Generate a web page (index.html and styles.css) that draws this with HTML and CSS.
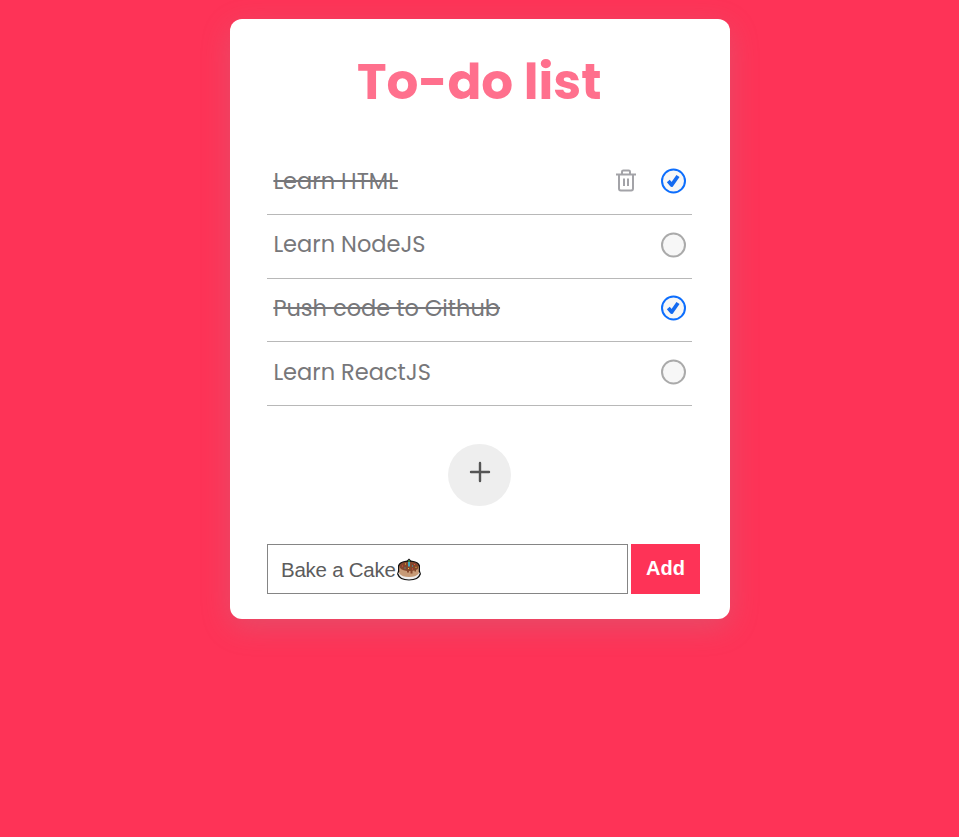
FILE: index.html
```html
<!DOCTYPE html>
<html lang="en">
<head>
<meta charset="utf-8">
<title>To-do list</title>
<link rel="stylesheet" href="styles.css">
</head>
<body>
<main class="card">
  <h1 class="title">To-do list</h1>
  <ul class="list">
    <li class="item">
      <span class="label done">Learn HTML</span>
      <svg class="trash" viewBox="0 0 20 23" fill="none" stroke="#a3a3a8" stroke-width="2"><path d="M0 5.5H20M6 5V2.8Q6 1.5 7.3 1.5H12.7Q14 1.5 14 2.8V5M3 6V19.5Q3 21.5 4.8 21.5H15.2Q17 21.5 17 19.5V6M8 9.5V17M12 9.5V17"/></svg>
      <svg class="check" viewBox="0 0 26 26"><circle cx="13.5" cy="13" r="11.5" fill="#f7f7f7" stroke="#0d6efd" stroke-width="2"/><path d="M8.3 13L11.7 17L18 8" fill="none" stroke="#146af0" stroke-width="3.8" stroke-linejoin="round"/></svg>
    </li>
    <li class="item">
      <span class="label">Learn NodeJS</span>
      <svg class="check" viewBox="0 0 26 26"><circle cx="13.5" cy="14" r="11.5" fill="#f7f7f7" stroke="#aaa" stroke-width="2"/></svg>
    </li>
    <li class="item">
      <span class="label done">Push code to Github</span>
      <svg class="check" viewBox="0 0 26 26"><circle cx="13.5" cy="13" r="11.5" fill="#f7f7f7" stroke="#0d6efd" stroke-width="2"/><path d="M8.3 13L11.7 17L18 8" fill="none" stroke="#146af0" stroke-width="3.8" stroke-linejoin="round"/></svg>
    </li>
    <li class="item">
      <span class="label">Learn ReactJS</span>
      <svg class="check" viewBox="0 0 26 26"><circle cx="13.5" cy="13" r="11.5" fill="#f7f7f7" stroke="#aaa" stroke-width="2"/></svg>
    </li>
  </ul>
  <button class="plus" aria-label="New task"><svg viewBox="0 0 22 22"><path d="M11 2V20M2 11H20" stroke="#555" stroke-width="2.4" stroke-linecap="round"/></svg></button>
  <form class="entry">
    <div class="field" role="textbox"><span class="value">Bake a Cake</span><svg class="cake" viewBox="0 0 24 23">
      <path d="M12 .5L14 2.5Q22 3.5 23 7.5V13L24 16Q22 22.5 12 22.5T0 16L1 13V7.5Q2 3.5 10 2.5Z" fill="#111"/>
      <path d="M1.3 15.5Q3 21.4 12 21.4T22.7 15.5L22 14H2Z" fill="#eee"/>
      <path d="M2.2 8H21.8V15.5Q19 19 12 19T2.2 15.5Z" fill="#c69a76"/>
      <path d="M2.2 8Q3 3.7 12 3.7T21.8 8Q21.5 11 19 12V13.5H17.5V12.5L15.5 12.8V15.5H13.5V13H12V14.5H10V13Q2.5 12 2.2 8Z" fill="#84472c"/>
      <path d="M12 4V8.5" stroke="#35b8d3" stroke-width="1.8"/><path d="M12 2V4" stroke="#43b64a" stroke-width="1.2"/>
      <path d="M5 8H6M17 6.5H18M15 11H16" stroke="#eb4c43"/><path d="M8 6H9M11 10.5H12M18.5 9.3H19.5" stroke="#f4cc32"/><path d="M7.5 10H8.5M15 8H16" stroke="#35b8d3"/>
    </svg></div>
    <button class="add" type="button">Add</button>
  </form>
</main>
</body>
</html>
```
FILE: styles.css
```css
* { box-sizing: border-box; }
body {
  margin: 0;
  min-height: 837px;
  padding-top: 19px;
  background: #fe3357;
  font-family: Poppins, Inter, sans-serif;
}
.card {
  width: 500px;
  height: 600px;
  margin: 0 0 0 230px;
  padding: 24px 30px 25px 37px;
  display: flex;
  flex-direction: column;
  background: #fff;
  border-radius: 12px;
  box-shadow: 0 8px 30px rgba(149, 157, 165, .24);
}
.title {
  margin: 0 0 0 90px;
  height: 107px;
  font-size: 50px;
  line-height: 77px;
  font-weight: 700;
  color: #ff708d;
  white-space: nowrap;
}
.list {
  width: 425px;
  margin: 0;
  padding: 0;
  list-style: none;
}
.item {
  height: 63.67px;
  padding: 0 6px 4px;
  display: flex;
  align-items: center;
  border-bottom: 1px solid #b8b8b8;
}
.item:first-child { height: 65px; padding-bottom: 2px; }
.label {
  margin-right: auto;
  padding-left: .4px;
  font-size: 22.5px;
  line-height: 30px;
  color: #77777a;
  white-space: nowrap;
}
.done {
  text-decoration: line-through;
  text-decoration-thickness: 2px;
}
.trash {
  width: 20px;
  height: 23px;
  margin: 0 24px 2px 0;
}
.check {
  width: 26px;
  height: 26px;
  overflow: visible;
}
.plus {
  width: 63px;
  height: 62px;
  margin: 38px 0 38px 181px;
  padding: 0 0 6px;
  display: flex;
  align-items: center;
  justify-content: center;
  border: 0;
  border-radius: 50%;
  background: #eee;
}
.plus svg { width: 22px; height: 22px; }
.entry {
  display: flex;
  gap: 3px;
  height: 50px;
}
.field {
  width: 361px;
  padding: 2px 0 0 13px;
  display: flex;
  align-items: center;
  border: 1px solid #858585;
  font: 20.5px "Liberation Sans", sans-serif;
  letter-spacing: -.25px;
  color: #5c5c5c;
}
.cake { width: 24px; height: 23px; margin-left: 1.5px; }
.add {
  width: 69px;
  padding: 0 0 1px;
  border: 0;
  background: #fe3357;
  color: #fff;
  font: bold 20px "Liberation Sans", sans-serif;
}
```
